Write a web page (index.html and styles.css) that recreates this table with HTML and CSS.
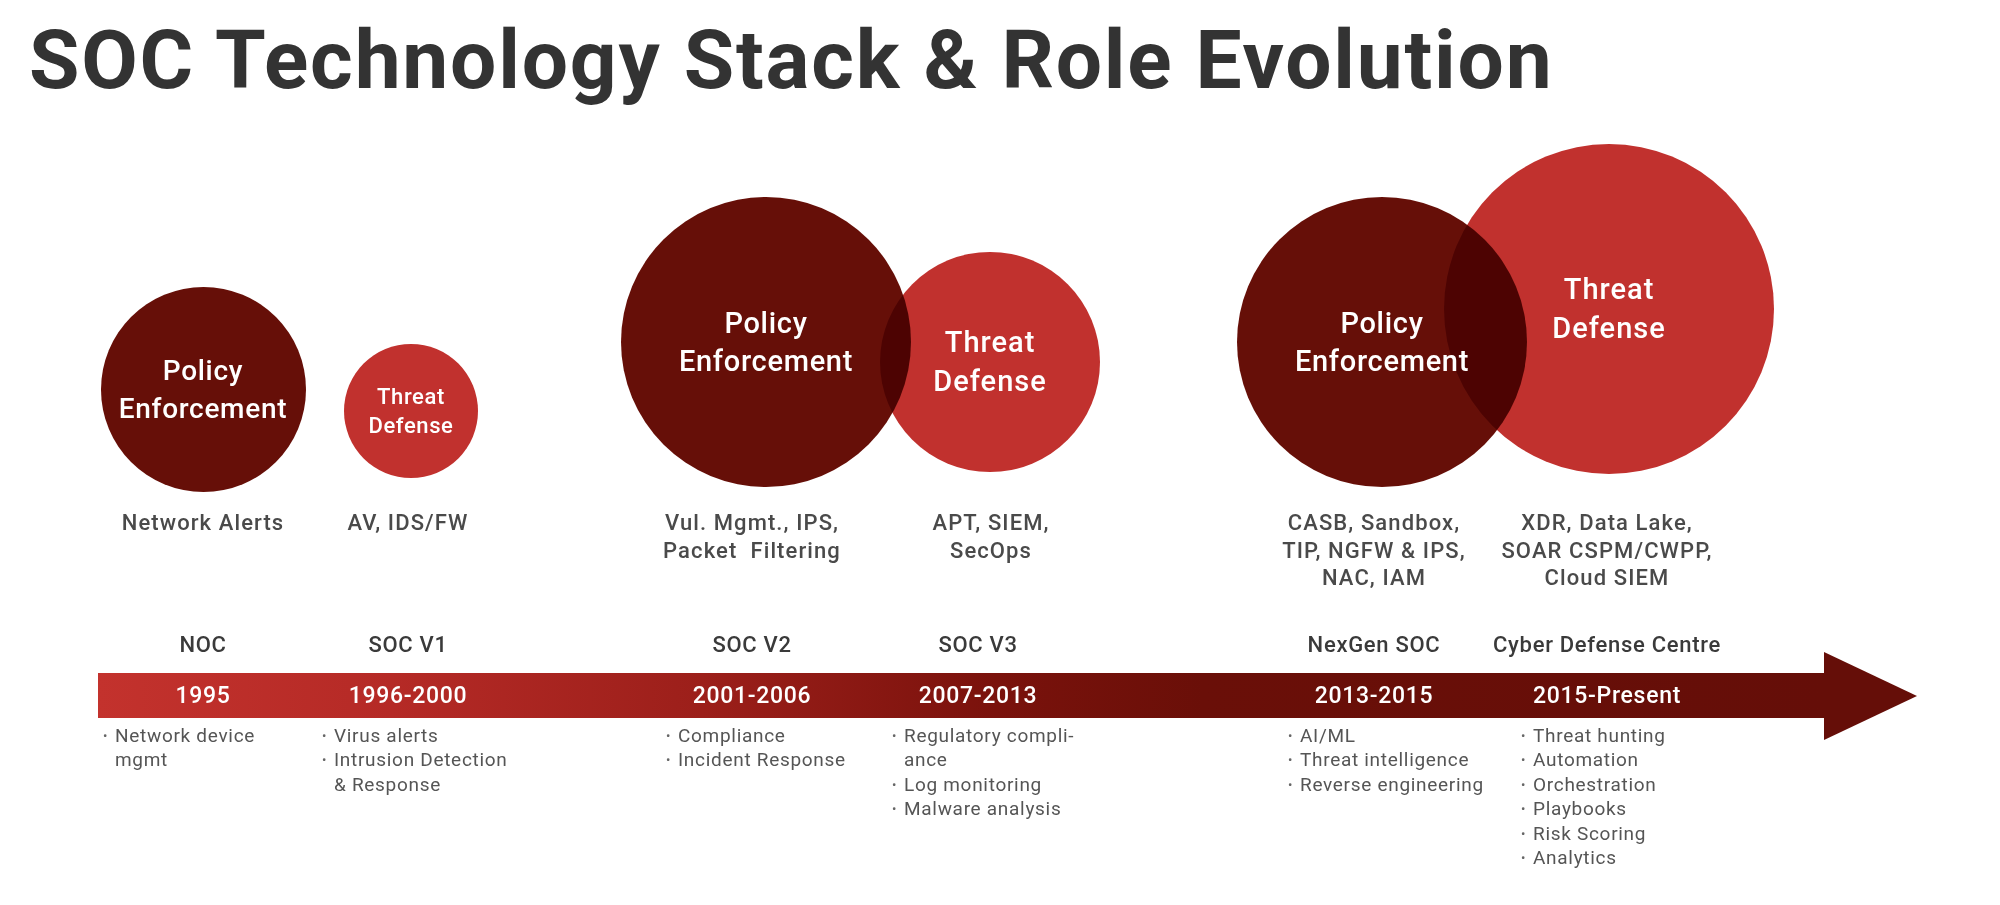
FILE: index.html
```html
<!DOCTYPE html>
<html lang="en">
<head>
<meta charset="utf-8">
<title>SOC Technology Stack &amp; Role Evolution</title>
<link rel="stylesheet" href="styles.css">
</head>
<body>
<h1 class="title">SOC Technology Stack &amp; Role Evolution</h1>

<div class="timeline">
  <!-- circles -->
  <div class="bubble-cell col-1"><div class="circle circle--policy c1"><span class="circle-label">Policy<br>Enforcement</span></div></div>
  <div class="bubble-cell col-2"><div class="circle circle--threat c2"><span class="circle-label">Threat<br>Defense</span></div></div>
  <div class="bubble-cell col-3"><div class="circle circle--policy c3"><span class="circle-label">Policy<br>Enforcement</span></div></div>
  <div class="bubble-cell col-4"><div class="circle circle--threat c4"><span class="circle-label">Threat<br>Defense</span></div></div>
  <div class="bubble-cell col-5"><div class="circle circle--policy c5"><span class="circle-label">Policy<br>Enforcement</span></div></div>
  <div class="bubble-cell col-6"><div class="circle circle--threat c6"><span class="circle-label">Threat<br>Defense</span></div></div>

  <!-- technologies -->
  <div class="desc col-1"><span>Network Alerts</span></div>
  <div class="desc col-2"><span>AV, IDS/FW</span></div>
  <div class="desc col-3"><span>Vul. Mgmt., IPS,<br>Packet&nbsp; Filtering</span></div>
  <div class="desc col-4 desc--shift"><span>APT, SIEM,<br>SecOps</span></div>
  <div class="desc col-5"><span>CASB, Sandbox,<br>TIP, NGFW &amp; IPS,<br>NAC, IAM</span></div>
  <div class="desc col-6"><span>XDR, Data Lake,<br>SOAR CSPM/CWPP,<br>Cloud SIEM</span></div>

  <!-- stage names -->
  <div class="stage col-1"><span>NOC</span></div>
  <div class="stage col-2"><span>SOC V1</span></div>
  <div class="stage col-3"><span>SOC V2</span></div>
  <div class="stage col-4"><span>SOC V3</span></div>
  <div class="stage col-5"><span>NexGen SOC</span></div>
  <div class="stage col-6"><span>Cyber Defense Centre</span></div>

  <!-- arrow bar -->
  <div class="bar">
    <div class="bar-body"></div>
    <svg class="bar-head" viewBox="0 0 93 88" width="93" height="88"><polygon points="0,0 93,44 0,88" fill="#650e08"/></svg>
  </div>
  <div class="year col-1"><span>1995</span></div>
  <div class="year col-2"><span>1996-2000</span></div>
  <div class="year col-3"><span>2001-2006</span></div>
  <div class="year col-4"><span>2007-2013</span></div>
  <div class="year col-5"><span>2013-2015</span></div>
  <div class="year col-6"><span>2015-Present</span></div>

  <!-- bullet lists -->
  <ul class="points col-1 points--first">
    <li><span>Network device<br>mgmt</span></li>
  </ul>
  <ul class="points col-2">
    <li><span>Virus alerts</span></li>
    <li><span>Intrusion Detection<br>&amp; Response</span></li>
  </ul>
  <ul class="points col-3">
    <li><span>Compliance</span></li>
    <li><span>Incident Response</span></li>
  </ul>
  <ul class="points col-4">
    <li><span>Regulatory compli-<br>ance</span></li>
    <li><span>Log monitoring</span></li>
    <li><span>Malware analysis</span></li>
  </ul>
  <ul class="points col-5">
    <li><span>AI/ML</span></li>
    <li><span>Threat intelligence</span></li>
    <li><span>Reverse engineering</span></li>
  </ul>
  <ul class="points col-6">
    <li><span>Threat hunting</span></li>
    <li><span>Automation</span></li>
    <li><span>Orchestration</span></li>
    <li><span>Playbooks</span></li>
    <li><span>Risk Scoring</span></li>
    <li><span>Analytics</span></li>
  </ul>
</div>
</body>
</html>
```

FILE: styles.css
```css
html, body {
  margin: 0;
  padding: 0;
  background: #ffffff;
}

body {
  width: 2000px;
  height: 905px;
  overflow: hidden;
  font-family: Roboto, "Liberation Sans", sans-serif;
}

.title {
  margin: 0;
  padding: 19px 0 0 29px;
  font-size: 82px;
  line-height: 82px;
  font-weight: 700;
  color: #333333;
  letter-spacing: 1.8px;
  white-space: nowrap;
}

.timeline {
  display: grid;
  grid-template-columns: 117px 172px 33px 172px 172px 172px 54px 172px 224px 172px 61px 172px 224px;
  grid-template-rows: auto 142px 39px 45px auto;
  margin-top: 43px;
}

.col-1 { grid-column: 2; }
.col-2 { grid-column: 4; }
.col-3 { grid-column: 6; }
.col-4 { grid-column: 8; }
.col-5 { grid-column: 10; }
.col-6 { grid-column: 12; }

/* circles */
.bubble-cell {
  grid-row: 1;
  display: flex;
  justify-content: center;
  align-items: flex-end;
}

.circle {
  flex-shrink: 0;
  border-radius: 50%;
  display: flex;
  align-items: center;
  justify-content: center;
  text-align: center;
  color: #ffffff;
  font-weight: 500;
  white-space: nowrap;
}

.circle--policy {
  background: #660f08;
  font-size: 29px;
  line-height: 38px;
  letter-spacing: 0.7px;
}

.circle--threat {
  background: #c1312e;
  mix-blend-mode: multiply;
  font-size: 29px;
  line-height: 39px;
  letter-spacing: 1px;
}

.circle-label {
  position: relative;
  z-index: 1;
}

.c1 { width: 205px; height: 205px; margin-bottom: 0; font-size: 28px; }
.c2 { width: 134px; height: 134px; margin-bottom: 14px; margin-left: 6px; font-size: 22px; line-height: 29px; letter-spacing: 0.6px; }
.c3 { width: 290px; height: 290px; margin-bottom: 5px; margin-left: 28px; }
.c4 { width: 220px; height: 220px; margin-bottom: 20px; margin-left: 24px; }
.c5 { width: 290px; height: 290px; margin-bottom: 5px; margin-left: 16px; }
.c6 { width: 330px; height: 330px; margin-bottom: 18px; margin-left: 4px; }

/* technology descriptions */
.desc {
  grid-row: 2;
  display: flex;
  justify-content: center;
  align-items: flex-start;
  padding-top: 17px;
  font-size: 22px;
  font-weight: 500;
  line-height: 27.5px;
  color: #4a4a4a;
  letter-spacing: 1.1px;
  text-align: center;
  white-space: nowrap;
}

.desc span { flex-shrink: 0; }
.desc--shift span { margin-left: 26px; }

/* stage names */
.stage {
  grid-row: 3;
  display: flex;
  justify-content: center;
  align-items: flex-start;
  font-size: 22px;
  font-weight: 500;
  line-height: 22px;
  color: #3a3a3a;
  letter-spacing: 0.7px;
  white-space: nowrap;
}

.stage span { flex-shrink: 0; }

/* arrow */
.bar {
  grid-row: 4;
  grid-column: 1 / -1;
  margin-left: 98px;
  display: flex;
  align-items: center;
}

.bar-body {
  flex: 1;
  height: 45px;
  background: linear-gradient(to right,
    #c3322d 0%,
    #b52a26 17%,
    #9c1f1a 35%,
    #7a120c 52%,
    #6a0f08 64%,
    #650e08 100%);
}

.bar-head {
  flex-shrink: 0;
  display: block;
}

.year {
  grid-row: 4;
  display: flex;
  justify-content: center;
  align-items: center;
  color: #ffffff;
  font-size: 23px;
  font-weight: 500;
  letter-spacing: 0.7px;
  white-space: nowrap;
}

.year span { flex-shrink: 0; }

/* bullet lists */
.points {
  grid-row: 5;
  list-style: none;
  margin: 6px 0 0;
  padding: 0;
  font-size: 19px;
  line-height: 24.4px;
  color: #555555;
  letter-spacing: 0.7px;
  white-space: nowrap;
}

.points--first { margin-left: -14px; }

.points li {
  display: flex;
  align-items: flex-start;
}

.points li::before {
  content: "\2022";
  width: 12px;
  flex-shrink: 0;
  font-size: 13px;
  line-height: 24.4px;
  color: #666666;
}
```
